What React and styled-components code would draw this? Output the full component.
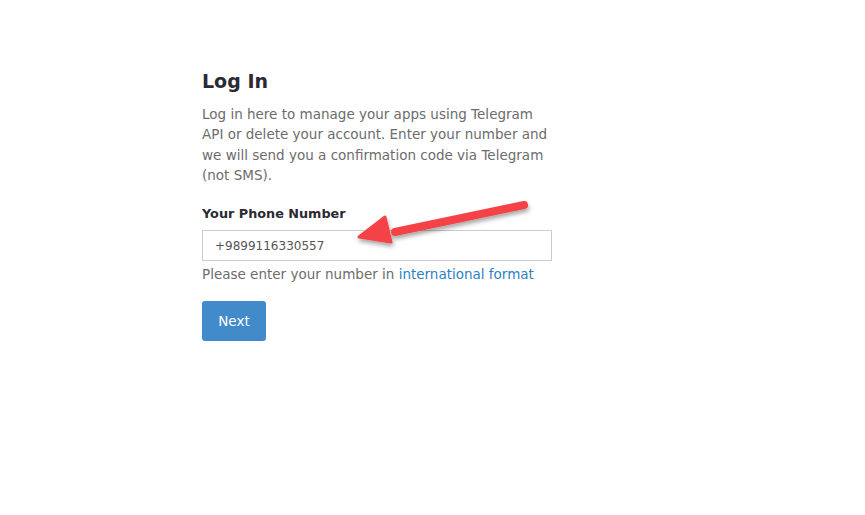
import React from 'react'
import styled, { createGlobalStyle } from 'styled-components'

const Global = createGlobalStyle`
  html, body {
    margin: 0;
    padding: 0;
    background: #ffffff;
    font-family: "DejaVu Sans", Verdana, sans-serif;
  }
`;

const Page = styled.div`
  width: 865px;
  height: 515px;
  position: relative;
  overflow: hidden;
`;

const Form = styled.div`
  width: 350px;
  padding: 68px 0 0 202px;
  display: flex;
  flex-direction: column;
`;

const Title = styled.h2`
  margin: 0;
  font-size: 19px;
  font-weight: bold;
  line-height: 26px;
  color: #2b2a33;
`;

const Lead = styled.p`
  margin: 10px 0 0;
  font-size: 13.5px;
  line-height: 20.3px;
  color: #6c6c6c;
`;

const Label = styled.label`
  margin-top: 19px;
  font-size: 12.8px;
  font-weight: bold;
  line-height: 20px;
  color: #2b2a33;
`;

const Input = styled.input`
  margin-top: 6px;
  box-sizing: border-box;
  width: 350px;
  height: 31px;
  padding: 0 12px;
  border: 1px solid #cccccc;
  border-radius: 0;
  font-family: inherit;
  font-size: 12px;
  color: #555555;
  outline: none;
`;

const Help = styled.p`
  margin: 3px 0 0;
  font-size: 13.5px;
  line-height: 20px;
  color: #6c6c6c;
`;

const Link = styled.a`
  color: #2f7fbf;
  text-decoration: none;
`;

const Button = styled.button`
  margin-top: 17px;
  align-self: flex-start;
  width: 64px;
  height: 40px;
  border: none;
  border-radius: 3px;
  background: #428bca;
  color: #ffffff;
  font-family: inherit;
  font-size: 13.5px;
  font-weight: normal;
  cursor: pointer;
`;

const Arrow = styled.svg`
  position: absolute;
  left: 340px;
  top: 190px;
  overflow: visible;
`;

const App = () => (
  <Page>
    <Global />
    <Form>
      <Title>Log In</Title>
      <Lead>
        Log in here to manage your apps using Telegram API or delete your account. Enter your number and we will send you a confirmation code via Telegram (not SMS).
      </Lead>
      <Label>Your Phone Number</Label>
      <Input defaultValue="+9899116330557" />
      <Help>
        Please enter your number in <Link href="#">international format</Link>
      </Help>
      <Button>Next</Button>
    </Form>
    <Arrow width="200" height="70" viewBox="0 0 200 70">
      <defs>
        <filter id="sh" x="-20%" y="-50%" width="140%" height="200%">
          <feDropShadow dx="1" dy="3" stdDeviation="2" floodColor="#000" floodOpacity="0.35" />
        </filter>
      </defs>
      <g filter="url(#sh)">
        <line x1="184" y1="15" x2="55" y2="42" stroke="#f44347" strokeWidth="8" strokeLinecap="round" />
        <polygon points="19,47 45,27 51,52" fill="#f44347" stroke="#f44347" strokeWidth="3" strokeLinejoin="round" />
      </g>
    </Arrow>
  </Page>
)

export default App
